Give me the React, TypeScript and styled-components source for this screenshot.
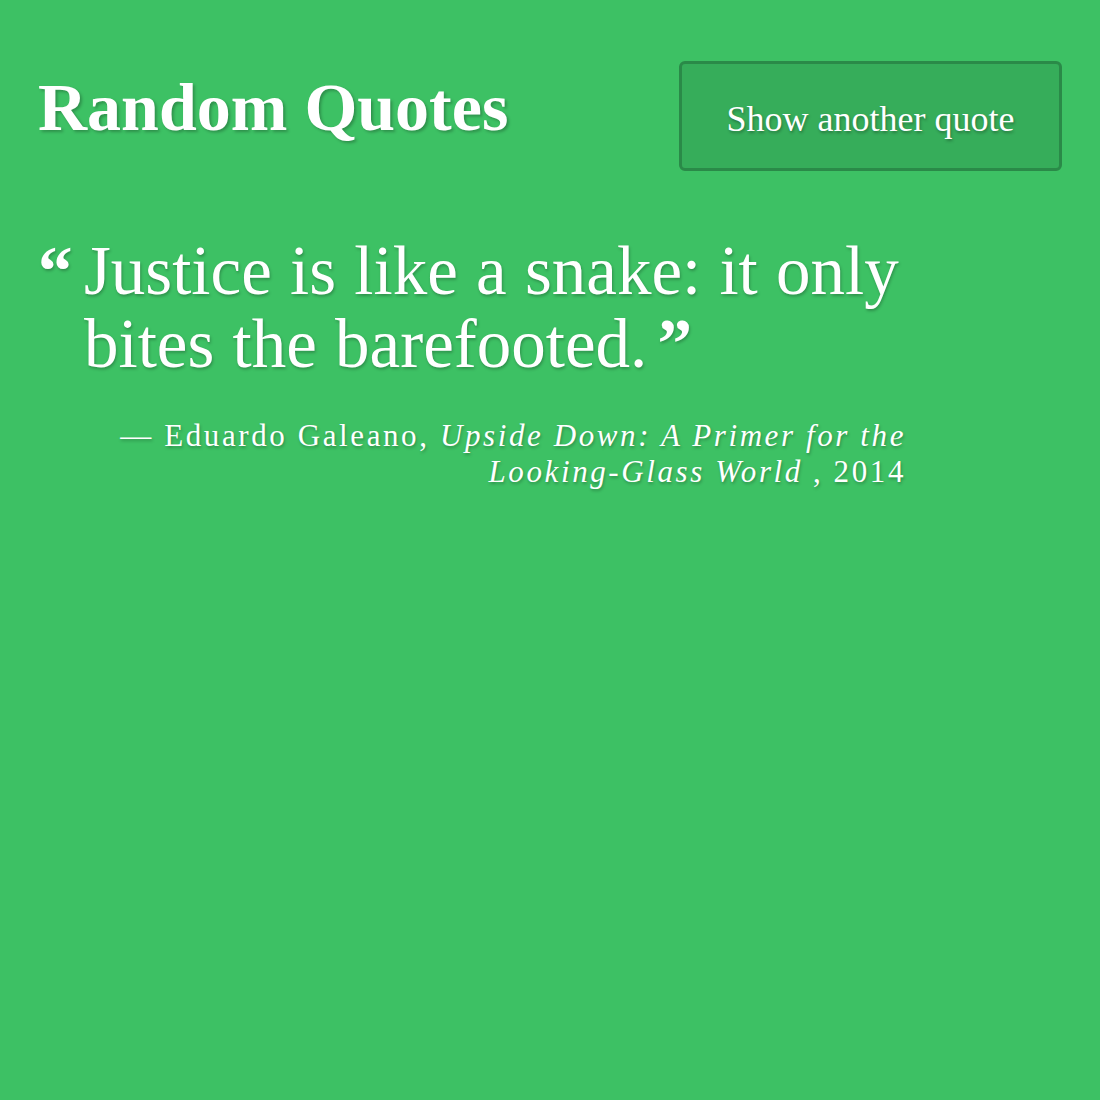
import React from "react";
import styled, { createGlobalStyle } from "styled-components";

const GlobalStyle = createGlobalStyle`
  html, body {
    margin: 0;
    padding: 0;
    background: #3dc164;
  }
  body {
    font-family: "Liberation Serif", "DejaVu Serif", serif;
    color: #ffffff;
  }
`;

const Page = styled.main`
  min-height: 1100px;
  box-sizing: border-box;
  padding: 61px 38px 40px 38px;
  background: #3dc164;
`;

const Header = styled.header`
  display: flex;
  justify-content: space-between;
  align-items: flex-start;
`;

const Title = styled.h1`
  margin: 12px 0 0 0;
  font-size: 68px;
  line-height: 68px;
  font-weight: 700;
  letter-spacing: 0;
  text-shadow: 2px 2px 3px rgba(0, 0, 0, 0.25);
`;

const NextButton = styled.button`
  box-sizing: border-box;
  width: 383px;
  height: 110px;
  border: 3px solid #2a8a48;
  border-radius: 6px;
  background: #36ad5a;
  color: #ffffff;
  font-family: "Liberation Serif", "DejaVu Serif", serif;
  font-size: 36px;
  padding: 6px 0 0 0;
  text-shadow: 1px 2px 3px rgba(0, 0, 0, 0.3);
  cursor: pointer;
`;

const QuoteBlock = styled.figure`
  margin: 64px 0 0 0;
  max-width: 868px;
  display: flex;
  align-items: flex-start;
`;

const OpenMark = styled.span`
  flex: 0 0 46px;
  font-size: 69px;
  line-height: 73px;
  font-weight: 700;
  text-shadow: 1px 2px 3px rgba(0, 0, 0, 0.25);
`;

const QuoteBody = styled.div`
  flex: 1;
  min-width: 0;
`;

const QuoteText = styled.blockquote`
  margin: 0;
  font-size: 69px;
  line-height: 73px;
  font-weight: 400;
  letter-spacing: 0;
  word-spacing: 1px;
  text-shadow: 1px 2px 3px rgba(0, 0, 0, 0.25);
`;

const CloseMark = styled.span`
  font-weight: 700;
  margin-left: 10px;
`;

const Attribution = styled.figcaption`
  margin-top: 37px;
  text-align: right;
  font-size: 31px;
  line-height: 36px;
  letter-spacing: 2.6px;
  text-shadow: 1px 2px 3px rgba(0, 0, 0, 0.25);
`;

const Source = styled.cite`
  font-style: italic;
  margin-right: 10px;
`;

export default function App() {
  return (
    <>
      <GlobalStyle />
      <Page>
        <Header>
          <Title>Random Quotes</Title>
          <NextButton type="button">Show another quote</NextButton>
        </Header>
        <QuoteBlock>
          <OpenMark>“</OpenMark>
          <QuoteBody>
            <QuoteText>
              Justice is like a snake: it only bites the barefooted.
              <CloseMark>”</CloseMark>
            </QuoteText>
            <Attribution>
              — Eduardo Galeano,{" "}
              <Source>Upside Down: A Primer for the Looking-Glass World</Source>
              , 2014
            </Attribution>
          </QuoteBody>
        </QuoteBlock>
      </Page>
    </>
  );
}
